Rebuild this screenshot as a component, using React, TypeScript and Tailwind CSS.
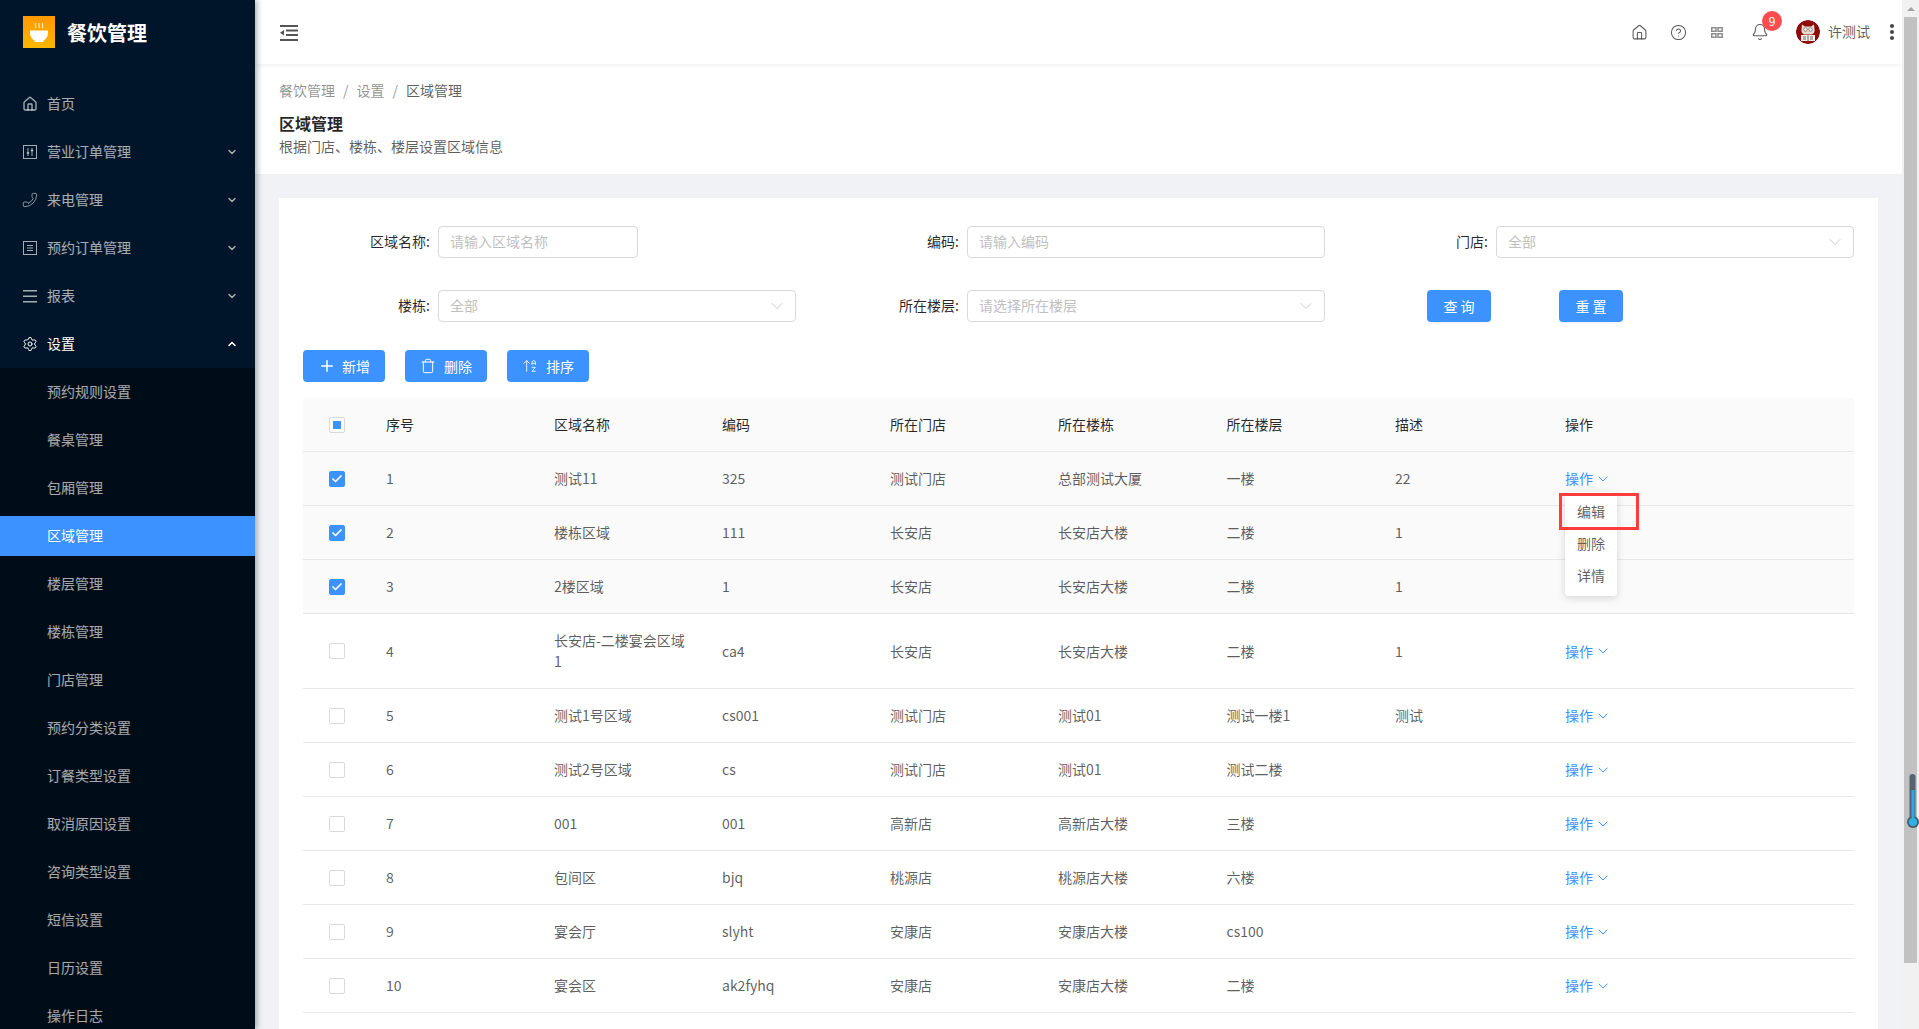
import { Check, ChevronDown, ChevronUp, CircleHelp, Settings, House, Phone, Plus, Trash, Bell, ArrowUpAZ } from "lucide-react";

const font = "font-['Noto_Sans_CJK_SC','Noto_Sans',sans-serif]";

const SliderBoxIcon = ({ className }: { className?: string }) => (
  <svg viewBox="0 0 16 16" className={className} fill="none" stroke="currentColor">
    <rect x="1.500" y="1.500" width="13" height="13" />
    <path d="M6 4v8M10 4v8" />
    <path d="M4.800 9h2.400M8.800 6.500h2.400" strokeWidth="1.500" />
  </svg>
);

const FormBoxIcon = ({ className }: { className?: string }) => (
  <svg viewBox="0 0 16 16" className={className} fill="none" stroke="currentColor">
    <rect x="1.500" y="1.500" width="13" height="13" />
    <path d="M5 5.500h6M5 8h6M5 10.500h6" />
  </svg>
);

const LinesIcon = ({ className }: { className?: string }) => (
  <svg viewBox="0 0 16 16" className={className} fill="currentColor">
    <rect x="1" y="2" width="14" height="1.500" />
    <rect x="1" y="7.500" width="14" height="1.500" />
    <rect x="1" y="13" width="14" height="1.500" />
  </svg>
);

const HandsetIcon = ({ className }: { className?: string }) => (
  <Phone className={`${className} -scale-x-100`} strokeWidth={1.25} />
);

const GridIcon = () => (
  <svg viewBox="0 0 12 11" className="w-3 h-[11px] text-[#8c8c8c]" fill="none" stroke="currentColor" strokeWidth="1.500">
    <rect x="0.750" y="0.750" width="4.200" height="3.500" />
    <rect x="7" y="0.750" width="4.200" height="3.500" />
    <rect x="0.750" y="6.750" width="4.200" height="3.500" />
    <rect x="7" y="6.750" width="4.200" height="3.500" />
  </svg>
);

const topMenu = [
  { name: "首页", icon: House },
  { name: "营业订单管理", icon: SliderBoxIcon, arrow: true },
  { name: "来电管理", icon: HandsetIcon, arrow: true },
  { name: "预约订单管理", icon: FormBoxIcon, arrow: true },
  { name: "报表", icon: LinesIcon, arrow: true },
];

const subMenu = ["预约规则设置", "餐桌管理", "包厢管理", "区域管理", "楼层管理", "楼栋管理", "门店管理", "预约分类设置", "订餐类型设置", "取消原因设置", "咨询类型设置", "短信设置", "日历设置", "操作日志"];

const rows = [
  { no: 1, name: "测试11", code: "325", store: "测试门店", building: "总部测试大厦", floor: "一楼", desc: "22", checked: true, open: true },
  { no: 2, name: "楼栋区域", code: "111", store: "长安店", building: "长安店大楼", floor: "二楼", desc: "1", checked: true, hideAction: true },
  { no: 3, name: "2楼区域", code: "1", store: "长安店", building: "长安店大楼", floor: "二楼", desc: "1", checked: true, hideAction: true },
  { no: 4, name: "长安店-二楼宴会区域1", code: "ca4", store: "长安店", building: "长安店大楼", floor: "二楼", desc: "1" },
  { no: 5, name: "测试1号区域", code: "cs001", store: "测试门店", building: "测试01", floor: "测试一楼1", desc: "测试" },
  { no: 6, name: "测试2号区域", code: "cs", store: "测试门店", building: "测试01", floor: "测试二楼", desc: "" },
  { no: 7, name: "001", code: "001", store: "高新店", building: "高新店大楼", floor: "三楼", desc: "" },
  { no: 8, name: "包间区", code: "bjq", store: "桃源店", building: "桃源店大楼", floor: "六楼", desc: "" },
  { no: 9, name: "宴会厅", code: "slyht", store: "安康店", building: "安康店大楼", floor: "cs100", desc: "" },
  { no: 10, name: "宴会区", code: "ak2fyhq", store: "安康店", building: "安康店大楼", floor: "二楼", desc: "" },
];

const headers = ["序号", "区域名称", "编码", "所在门店", "所在楼栋", "所在楼层", "描述", "操作"];

const Logo = () => (
  <svg viewBox="0 0 32 32" className="w-8 h-8 shrink-0">
    <defs>
      <linearGradient id="logoBg" x1="0" y1="0" x2="0" y2="1">
        <stop offset="0" stopColor="#ff9800" />
        <stop offset="1" stopColor="#fbb700" />
      </linearGradient>
    </defs>
    <rect width="32" height="32" fill="url(#logoBg)" />
    <path d="M7 14.500h18v2.500c0 3.500-2 6-4.500 7.500V26h-9v-1.500C9 23 7 20.500 7 17z" fill="#fff" />
    <path d="M12.500 7c-1 1.500 1 2.500 0 5M16 7c-1 1.500 1 2.500 0 5M19.500 7c-1 1.500 1 2.500 0 5" stroke="#fff" strokeWidth="1" fill="none" />
  </svg>
);

const Avatar = () => (
  <svg viewBox="0 0 24 24" className="w-6 h-6 shrink-0 rounded-full">
    <circle cx="12" cy="12" r="12" fill="#8f0a0a" />
    <path d="M6 4.500l3 2h6l3-2 .5 5c.5 2-.5 4-2.500 5H8c-2-1-3-3-2.500-5z" fill="#e9d9cf" />
    <circle cx="9.500" cy="9.500" r="1.800" fill="#f6f0ea" stroke="#555" strokeWidth=".6" />
    <circle cx="14.500" cy="9.500" r="1.800" fill="#f6f0ea" stroke="#555" strokeWidth=".6" />
    <rect x="5" y="15" width="14" height="6" fill="#f2efe9" />
    <path d="M12 15v6M7 17h3M14 17h3M7 19h3M14 19h3" stroke="#333" strokeWidth=".7" />
  </svg>
);

const Thermometer = () => (
  <svg viewBox="0 0 14 56" className="w-[14px] h-[56px]">
    <rect x="3.500" y="1" width="6" height="46" rx="3" fill="#56626e" />
    <circle cx="7" cy="49" r="6" fill="#4b5661" />
    <rect x="5.500" y="17" width="3" height="30" fill="#2ea8e0" />
    <circle cx="7" cy="49" r="4.300" fill="#2fb0e6" />
  </svg>
);

const Select = ({ text, width }: { text: string; width: string }) => (
  <div className={`h-8 ${width} border border-[#d9d9d9] rounded flex items-center justify-between pl-[11px] pr-[8px] text-[14px] text-[#bfbfbf] bg-white`}>
    <span className="pb-[2px]">{text}</span>
    <ChevronDown className="w-5 h-5 text-[#bfbfbf]" strokeWidth={1} />
  </div>
);

const Input = ({ text, width }: { text: string; width: string }) => (
  <div className={`h-8 ${width} border border-[#d9d9d9] rounded flex items-center pl-[11px] pb-[2px] text-[14px] text-[#bfbfbf] bg-white`}>{text}</div>
);

const Field = ({ label, children }: { label: string; children: React.ReactNode }) => (
  <div className="flex items-center">
    <label className="w-[135px] pr-2 pb-[2px] text-right text-[14px] text-black/85 shrink-0">{label}:</label>
    {children}
  </div>
);

const ToolButton = ({ icon, text, gap }: { icon: React.ReactNode; text: string; gap: string }) => (
  <button className={`w-[82px] h-8 rounded bg-[#3c92ff] text-white text-[14px] flex items-center justify-center ${gap}`}>
    {icon}
    <span>{text}</span>
  </button>
);

const Checkbox = ({ checked, partial }: { checked?: boolean; partial?: boolean }) => (
  <span className={`w-4 h-4 rounded-[2px] border flex items-center justify-center ${checked ? "bg-[#3c92ff] border-[#3c92ff]" : "bg-white border-[#d9d9d9]"}`}>
    {checked && <Check className="w-3 h-3 text-white" strokeWidth={3.500} />}
    {partial && <span className="w-2 h-2 bg-[#3c92ff]" />}
  </span>
);

const App = () => {
  return (
    <div className={`w-full h-[1029px] overflow-hidden flex bg-[#f0f2f5] ${font}`}>
      {/* Sidebar */}
      <aside className="w-[255px] shrink-0 h-full bg-[#001529] shadow-[2px_0_6px_rgba(0,21,41,0.35)] z-10 overflow-hidden">
        <div className="h-[64px] flex items-center pl-[23px] gap-3">
          <Logo />
          <span className="text-white font-bold text-[20px] pt-[2px]">餐饮管理</span>
        </div>
        <nav className="pt-5">
          {topMenu.map((item) => (
            <div key={item.name} className="h-10 mb-2 pl-[22px] pr-[17px] flex items-center text-[14px] text-white/65">
              <item.icon className="w-4 h-4 mr-[9px]" />
              <span className="flex-1 pb-[2px]">{item.name}</span>
              {item.arrow && <ChevronDown className="w-3 h-3" strokeWidth={3} />}
            </div>
          ))}
          <div className="h-10 mb-1 pl-[22px] pr-[17px] flex items-center text-[14px] text-white">
            <Settings className="w-4 h-4 mr-[9px]" strokeWidth={1.5} />
            <span className="flex-1 pb-[2px]">设置</span>
            <ChevronUp className="w-3 h-3" strokeWidth={3} />
          </div>
          <div className="bg-[#000c17] pt-1">
            {subMenu.map((name) => (
              <div key={name} className={`h-10 mb-2 pl-[47px] pb-[2px] flex items-center text-[14px] ${name === "区域管理" ? "bg-[#3c92ff] text-white" : "text-white/65"}`}>
                {name}
              </div>
            ))}
          </div>
        </nav>
      </aside>

      {/* Main */}
      <main className="flex-1 min-w-0 h-full overflow-hidden">
        <header className="h-[64px] bg-white shadow-[0_1px_4px_rgba(0,21,41,0.08)] relative flex items-center justify-between pl-[25px] pr-[8px]">
          <svg viewBox="0 0 18 16" className="w-[18px] h-4 mt-[2px] text-[#555]" fill="currentColor">
            <rect y="0" width="18" height="2" />
            <rect x="6" y="4.500" width="12" height="2" />
            <rect x="6" y="9" width="12" height="2" />
            <rect y="14" width="18" height="2" />
            <path d="M0 7.700L4 5v5.500z" />
          </svg>
          <div className="flex items-center text-[#595959]">
            <House className="w-[17px] h-[17px]" strokeWidth={1.500} />
            <CircleHelp className="w-[17px] h-[17px] ml-[22px]" strokeWidth={1.500} />
            <div className="ml-6"><GridIcon /></div>
            <div className="relative ml-7">
              <Bell className="w-[18px] h-[18px]" strokeWidth={1.500} />
              <span className="absolute -top-[12px] left-[11px] w-5 h-5 rounded-full bg-[#ff4d4f] text-white text-[12px] flex items-center justify-center">9</span>
            </div>
            <div className="ml-[27px]"><Avatar /></div>
            <span className="ml-2 pb-[2px] text-[14px] text-black/65">许测试</span>
            <span className="ml-5 flex flex-col gap-[2px]">
              <i className="w-1 h-1 rounded-full bg-[#444]" />
              <i className="w-1 h-1 rounded-full bg-[#444]" />
              <i className="w-1 h-1 rounded-full bg-[#444]" />
            </span>
          </div>
        </header>

        <section className="h-[110px] bg-white pl-6 pt-[16px]">
          <div className="flex items-center h-[21px] text-[14px] text-black/45 gap-2">
            <span>餐饮管理</span><span>/</span><span>设置</span><span>/</span><span className="text-black/65">区域管理</span>
          </div>
          <h1 className="mt-[10px] text-[16px] leading-[24px] font-bold text-black/85">区域管理</h1>
          <p className="mt-[1px] text-[14px] leading-[21px] text-black/65">根据门店、楼栋、楼层设置区域信息</p>
        </section>

        <div className="pt-6 px-6">
          <div className="bg-white px-6 pt-7 pb-6">
            <div className="grid grid-cols-[529px_529px_1fr] gap-y-8">
              <Field label="区域名称"><Input text="请输入区域名称" width="w-[200px]" /></Field>
              <Field label="编码"><Input text="请输入编码" width="w-[358px]" /></Field>
              <Field label="门店"><Select text="全部" width="w-[358px]" /></Field>
              <Field label="楼栋"><Select text="全部" width="w-[358px]" /></Field>
              <Field label="所在楼层"><Select text="请选择所在楼层" width="w-[358px]" /></Field>
              <div className="flex gap-[68px] pl-[66px]">
                <button className="w-16 h-8 rounded bg-[#3c92ff] text-white text-[14px] shadow-[0_2px_0_rgba(0,0,0,0.03)]">查 询</button>
                <button className="w-16 h-8 rounded bg-[#3c92ff] text-white text-[14px] shadow-[0_2px_0_rgba(0,0,0,0.03)]">重 置</button>
              </div>
            </div>

            <div className="flex gap-5 mt-7 mb-4">
              <ToolButton gap="gap-[6px]" icon={<Plus className="w-[18px] h-[18px]" strokeWidth={2} />} text="新增" />
              <ToolButton gap="gap-[8px]" icon={<Trash className="w-4 h-4" strokeWidth={1.500} />} text="删除" />
              <ToolButton gap="gap-[8px]" icon={<ArrowUpAZ className="w-4 h-4" strokeWidth={1.25} />} text="排序" />
            </div>

            <table className="w-[1551px] table-fixed border-collapse text-[14px] leading-[21px] text-black/65">
              <colgroup>
                <col className="w-[67px]" />
                <col className="w-[168px]" />
                <col className="w-[168px]" />
                <col className="w-[168px]" />
                <col className="w-[168px]" />
                <col className="w-[168.500px]" />
                <col className="w-[168.500px]" />
                <col className="w-[170px]" />
                <col />
              </colgroup>
              <thead>
                <tr className="bg-[#fafafa] border-b border-[#e8e8e8] text-black/85">
                  <th className="py-4 pl-[26px] font-normal"><Checkbox partial /></th>
                  {headers.map((h) => (
                    <th key={h} className="p-4 font-normal text-left">{h}</th>
                  ))}
                </tr>
              </thead>
              <tbody>
                {rows.map((r) => (
                  <tr key={r.no} className={`border-b border-[#e8e8e8] ${r.checked ? "bg-[#fafafa]" : "bg-white"}`}>
                    <td className="py-4 pl-[26px]"><Checkbox checked={r.checked} /></td>
                    <td className="p-4">{r.no}</td>
                    <td className="p-4">{r.name}</td>
                    <td className="p-4">{r.code}</td>
                    <td className="p-4">{r.store}</td>
                    <td className="p-4">{r.building}</td>
                    <td className="p-4">{r.floor}</td>
                    <td className="p-4">{r.desc}</td>
                    <td className="p-4 relative">
                      {!r.hideAction && (
                        <span className="inline-flex items-center gap-[2px] text-[#3c92ff]">
                          操作 <ChevronDown className="w-4 h-4" strokeWidth={1.500} />
                        </span>
                      )}
                      {r.open && (
                        <>
                          <div className="absolute left-4 top-[40px] w-[52px] z-10 py-1 bg-white rounded shadow-[0_2px_8px_rgba(0,0,0,0.15)] text-center">
                            <div className="h-8 leading-[30px]">编辑</div>
                            <div className="h-8 leading-[30px]">删除</div>
                            <div className="h-8 leading-[30px]">详情</div>
                          </div>
                          <div className="absolute left-[10px] top-[41px] w-20 h-[37px] z-20 border-[3px] border-[#ff3b3b]" />
                        </>
                      )}
                    </td>
                  </tr>
                ))}
              </tbody>
            </table>
          </div>
        </div>
      </main>

      {/* Page scrollbar */}
      <div className="w-[17px] shrink-0 h-full bg-[#f1f1f1] flex flex-col px-[2px] relative">
        <div className="h-[17px] flex items-center justify-center">
          <span className="w-0 h-0 border-x-[4px] border-x-transparent border-b-[4px] border-b-[#a3a3a3]" />
        </div>
        <div className="w-[13px] h-[946px] bg-[#c1c1c1]" />
        <div className="absolute left-[4px] top-[773px]"><Thermometer /></div>
      </div>
    </div>
  );
};

export default App;
